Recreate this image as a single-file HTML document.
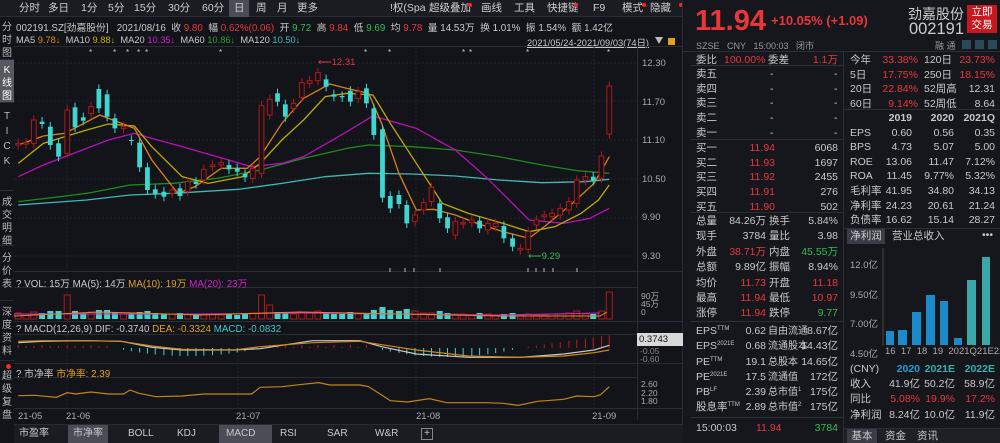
<!DOCTYPE html>
<html><head><meta charset="utf-8">
<style>
*{margin:0;padding:0;box-sizing:border-box}
body{width:1000px;height:443px;background:#131419;color:#c9c9c9;font-family:"Liberation Sans","Noto Sans CJK SC",sans-serif;font-size:10px;overflow:hidden;position:relative}
.a{position:absolute;white-space:nowrap}
.r{color:#e8363b}.g{color:#2fbf4f}.y{color:#e0a020}
.side{position:absolute;left:0;width:14px;text-align:center;font-size:10px;line-height:13px;color:#bbb;border-bottom:1px solid #2a2c33}
.rt{position:absolute;font-size:10.5px;line-height:14px;white-space:nowrap}
.rv{text-align:right}
.sp{font-size:6px;position:relative;top:-4px;line-height:0}
.tt{position:absolute;top:0;line-height:17px;font-size:10.5px;color:#cfcfcf}
svg *{vector-effect:non-scaling-stroke}
</style></head><body>
<!-- top toolbar -->
<div class="a" style="left:0;top:0;width:683px;height:17px;background:#1a1c22;border-bottom:1px solid #2a2c33"></div>
<div class="a" style="left:229px;top:0;width:20px;height:17px;background:#4a4d56"></div>
<span class="tt" style="left:19px">分时</span><span class="tt" style="left:48px">多日</span><span class="tt" style="left:81px">1分</span><span class="tt" style="left:108px">5分</span><span class="tt" style="left:134px">15分</span><span class="tt" style="left:168px">30分</span><span class="tt" style="left:202px">60分</span><span class="tt" style="left:234px">日</span><span class="tt" style="left:256px">周</span><span class="tt" style="left:277px">月</span><span class="tt" style="left:297px">更多</span>
<span class="tt" style="left:390px">!权(Spa</span><span class="tt" style="left:429px">超级叠加</span><span class="tt" style="left:481px">画线</span><span class="tt" style="left:514px">工具</span><span class="tt" style="left:547px">快捷键</span><span class="tt" style="left:593px">F9</span><span class="tt" style="left:622px">模式</span><span class="tt" style="left:650px">隐藏</span>
<div class="a" style="left:468px;top:3px;width:4px;height:4px;border-radius:2px;background:#f22"></div>
<div class="a" style="left:574px;top:3px;width:4px;height:4px;border-radius:2px;background:#f22"></div>
<div class="a" style="left:642px;top:3px;width:4px;height:4px;border-radius:2px;background:#f22"></div>
<div class="a" style="left:679px;top:3px;width:4px;height:4px;border-radius:2px;background:#f22"></div>
<!-- info line -->
<div class="a" style="left:16px;top:20px;font-size:9.8px">002191.SZ[劲嘉股份]&nbsp;&nbsp;&nbsp;2021/08/16&nbsp;&nbsp;收 <span class="r">9.80</span>&nbsp;&nbsp;幅 <span class="r">0.62%(0.06)</span>&nbsp;&nbsp;开 <span class="g">9.72</span>&nbsp;&nbsp;高 <span class="r">9.84</span>&nbsp;&nbsp;低 <span class="g">9.69</span>&nbsp;&nbsp;均 <span class="r">9.78</span>&nbsp;&nbsp;量 14.53万&nbsp;&nbsp;换 1.01%&nbsp;&nbsp;振 1.54%&nbsp;&nbsp;额 1.42亿</div>
<div class="a" style="left:16px;top:35px;font-size:9.3px">MA5 <span style="color:#e08a1e">9.78↓</span>&nbsp;&nbsp;MA10 <span style="color:#c8b400">9.88↓</span>&nbsp;&nbsp;MA20 <span style="color:#d020d0">10.35↓</span>&nbsp;&nbsp;MA60 <span style="color:#2aa02a">10.86↓</span>&nbsp;&nbsp;MA120 <span style="color:#40c0c0">10.50↓</span></div>
<div class="a" style="left:527px;top:35px;font-size:9.3px;text-decoration:underline">2021/05/24-2021/09/03(74日)</div>
<div class="a" style="left:655px;top:37px;width:0;height:0;border-left:4px solid transparent;border-right:4px solid transparent;border-top:7px solid #bbb"></div>
<div class="a" style="left:668px;top:38px;width:7px;height:7px;background:#e0a020"></div>
<!-- sidebar -->
<div class="side" style="top:17px;height:43px;padding-top:4px">分<br>时<br>图</div>
<div class="side" style="top:60px;height:43px;background:#55585f;padding-top:4px;color:#fff">K<br>线<br>图</div>
<div class="side" style="top:103px;height:88px;padding-top:6px;line-height:15px">T<br>I<br>C<br>K</div>
<div class="side" style="top:191px;height:55px;padding-top:5px">成<br>交<br>明<br>细</div>
<div class="side" style="top:246px;height:55px;padding-top:6px">分<br>价<br>表</div>
<div class="side" style="top:301px;height:60px;padding-top:5px">深<br>度<br>资<br>料</div>
<div class="a" style="left:6px;top:364px;width:5px;height:5px;border-radius:3px;background:#f22"></div>
<div class="side" style="top:370px;height:73px;border:0">超<br>级<br>复<br>盘</div>
<svg class="a" style="left:0;top:0" width="683" height="443">
<g stroke="#2a2c33" stroke-width="1">
<line x1="14" y1="46.5" x2="683" y2="46.5"/>
<line x1="637.5" y1="46" x2="637.5" y2="420"/>
<line x1="682.5" y1="0" x2="682.5" y2="443"/>
<line x1="14" y1="271.5" x2="683" y2="271.5"/>
<line x1="14" y1="287.5" x2="637" y2="287.5"/>
<line x1="14" y1="321.5" x2="683" y2="321.5"/>
<line x1="14" y1="334.5" x2="637" y2="334.5"/>
<line x1="14" y1="363.5" x2="683" y2="363.5"/>
<line x1="14" y1="377.5" x2="637" y2="377.5"/>
<line x1="14" y1="408.5" x2="683" y2="408.5"/>
<line x1="14" y1="424.5" x2="683" y2="424.5"/>
</g>
<g stroke="#23252b" stroke-dasharray="2,2">
<line x1="67" y1="47" x2="67" y2="408"/><line x1="238" y1="47" x2="238" y2="408"/><line x1="416" y1="47" x2="416" y2="408"/><line x1="594" y1="47" x2="594" y2="408"/>
<line x1="14" y1="63" x2="637" y2="63"/><line x1="14" y1="101" x2="637" y2="101"/><line x1="14" y1="140" x2="637" y2="140"/><line x1="14" y1="179" x2="637" y2="179"/><line x1="14" y1="218" x2="637" y2="218"/><line x1="14" y1="256" x2="637" y2="256"/>
</g>
<g transform="translate(0,50) scale(0.43365,0.33333)" fill="none" stroke-width="1.3">
<polyline stroke="#40b8b8" points="42,465 200,450 300,435 400,430 550,418 650,400 750,380 850,370 950,372 1050,378 1150,390 1250,398 1350,395 1405,388"/>
<polyline stroke="#1e8a1e" points="42,455 140,440 200,430 300,405 400,400 500,385 600,360 700,325 800,295 850,285 950,290 1050,300 1150,320 1250,345 1330,362 1405,370"/>
<polyline stroke="#b810b8" points="42,380 100,345 150,320 250,270 310,250 350,265 420,290 500,320 580,350 650,340 700,320 800,245 860,198 960,235 1050,300 1120,380 1220,510 1300,520 1360,505 1405,475"/>
<polyline stroke="#c0aa00" points="42,340 100,280 150,260 200,240 250,222 310,228 350,290 420,380 480,400 560,380 600,340 650,270 700,210 750,140 800,130 860,135 900,220 960,340 1020,460 1080,490 1160,520 1220,545 1280,530 1340,490 1380,450 1405,405"/>
<polyline stroke="#d8801a" points="42,285 100,258 150,250 230,195 270,215 310,235 350,330 410,430 450,410 510,355 570,355 600,320 650,220 700,145 760,102 800,115 850,130 880,220 920,370 960,480 1000,478 1050,495 1100,520 1160,545 1220,565 1260,525 1320,460 1370,400 1405,320"/>
<g id="cd"></g>
</g>
<g id="vol"></g><g id="macd"></g>
<g transform="translate(0,270) scale(0.43365,0.33333)" fill="none" stroke-width="1.2">
<polyline stroke="#c8c8c8" points="42,218 100,214 200,212 280,214 350,232 420,240 540,240 600,236 720,212 830,212 880,230 960,252 1080,262 1200,262 1300,252 1370,240 1405,226"/>
<polyline stroke="#d08a18" points="42,214 100,212 200,212 280,214 350,228 420,238 540,240 600,230 720,218 830,214 880,224 960,240 1080,258 1200,262 1300,258 1370,248 1405,240"/>
<polyline stroke="#c0841a" points="42,377 80,376 130,382 155,368 175,372 210,366 250,372 285,372 300,360 320,370 360,380 420,378 470,372 540,372 580,372 600,352 650,350 690,344 735,338 760,345 830,345 850,350 880,375 900,392 940,396 990,386 1030,398 1080,398 1120,398 1160,400 1195,406 1240,394 1300,388 1330,378 1370,380 1385,374 1405,350"/>
</g>
<g fill="#ccc" font-size="8" font-family="Liberation Sans">
<text x="89" y="55">*</text><text x="113" y="55">*</text><text x="126" y="55">*</text><text x="137" y="55">*</text><text x="145" y="55">*</text><text x="219" y="55">*</text><text x="364" y="55">*</text><text x="388" y="55">*</text><text x="462" y="55">*</text><text x="469" y="55">*</text><text x="526" y="55">*</text><text x="607" y="55">*</text>
</g>
<g stroke="#bbb"><line x1="390" y1="268" x2="390" y2="272"/><line x1="405" y1="268" x2="405" y2="272"/><line x1="414" y1="268" x2="414" y2="272"/><line x1="440" y1="268" x2="440" y2="272"/><line x1="528" y1="268" x2="528" y2="272"/><line x1="536" y1="268" x2="536" y2="272"/><line x1="544" y1="268" x2="544" y2="272"/><line x1="553" y1="268" x2="553" y2="272"/><line x1="577" y1="268" x2="577" y2="272"/></g>
</svg>
<!-- price axis -->
<div class="a" style="left:642px;top:58px;font-size:9.5px;color:#aaa">12.30</div>
<div class="a" style="left:642px;top:97px;font-size:9.5px;color:#aaa">11.70</div>
<div class="a" style="left:642px;top:135px;font-size:9.5px;color:#aaa">11.10</div>
<div class="a" style="left:642px;top:174px;font-size:9.5px;color:#aaa">10.50</div>
<div class="a" style="left:642px;top:212px;font-size:9.5px;color:#aaa">9.90</div>
<div class="a" style="left:642px;top:251px;font-size:9.5px;color:#aaa">9.30</div>
<div class="a r" style="left:318px;top:57px;font-size:9.5px">⟵12.31</div>
<div class="a g" style="left:528px;top:251px;font-size:9.5px">⟵9.29</div>
<!-- panel headers -->
<div class="a" style="left:16px;top:276px;font-size:9.8px">? VOL: 15万 MA(5): 14万 <span class="y">MA(10): 19万</span> <span style="color:#d020d0">MA(20): 23万</span></div>
<div class="a" style="left:641px;top:292px;font-size:8.5px;line-height:8px;color:#aaa">90万<br>45万<br>0</div>
<div class="a" style="left:16px;top:324px;font-size:9.8px">? MACD(12,26,9) DIF: -0.3740 <span class="y">DEA: -0.3324</span> <span style="color:#40c8c8">MACD: -0.0832</span></div>
<div class="a" style="left:637px;top:333px;width:46px;height:13px;background:#d8d8d8;color:#111;font-size:9.5px;padding-left:2px;line-height:13px">0.3743</div>
<div class="a" style="left:640px;top:347px;font-size:8.5px;line-height:8px;color:#888">-0.05<br>-0.60</div>
<div class="a" style="left:16px;top:366px;font-size:9.8px">? 市净率 <span class="y">市净率: 2.39</span></div>
<div class="a" style="left:641px;top:380px;font-size:8.5px;line-height:8.5px;color:#aaa">2.60<br>2.20<br>1.80</div>
<div class="a" style="left:18px;top:411px;font-size:9.5px;color:#aaa">21-05</div>
<div class="a" style="left:66px;top:411px;font-size:9.5px;color:#aaa">21-06</div>
<div class="a" style="left:236px;top:411px;font-size:9.5px;color:#aaa">21-07</div>
<div class="a" style="left:416px;top:411px;font-size:9.5px;color:#aaa">21-08</div>
<div class="a" style="left:592px;top:411px;font-size:9.5px;color:#aaa">21-09</div>
<!-- bottom tabs -->
<div class="a" style="left:14px;top:425px;width:669px;height:18px;background:#1a1c22;font-size:10px;line-height:18px">
<span class="a" style="left:5px">市盈率</span>
<span class="a" style="left:54px;width:40px;height:18px;background:#4a4d56;padding-left:5px">市净率</span>
<span class="a" style="left:114px">BOLL</span><span class="a" style="left:163px">KDJ</span>
<span class="a" style="left:205px;width:53px;height:18px;background:#4a4d56;padding-left:7px">MACD</span>
<span class="a" style="left:266px">RSI</span><span class="a" style="left:313px">SAR</span><span class="a" style="left:361px">W&amp;R</span>
<span class="a" style="left:407px;top:3px;width:12px;height:12px;border:1px solid #888;line-height:10px;text-align:center">+</span>
</div>

<!-- RIGHT PANEL -->
<div class="a" style="left:683px;top:0;width:317px;height:443px;background:#16171c"></div>
<div class="a r" style="left:695px;top:4px;font-size:29px;font-weight:bold;line-height:34px">11.94</div>
<div class="a r" style="left:771px;top:13px;font-size:13px;font-weight:bold">+10.05% (+1.09)</div>
<div class="a" style="left:905px;top:4px;width:59px;text-align:right;font-size:14px;color:#ccc">劲嘉股份</div>
<div class="a" style="left:900px;top:20px;width:64px;text-align:right;font-size:16.5px;color:#ccc">002191</div>
<div class="a" style="left:967px;top:5px;width:30px;height:28px;background:#c8181f;color:#fff;font-size:10.5px;line-height:13px;text-align:center;padding-top:1px">立即<br>交易</div>
<div class="a" style="left:696px;top:39px;font-size:9px;color:#999">SZSE&nbsp;&nbsp;&nbsp;CNY&nbsp;&nbsp;&nbsp;15:00:03&nbsp;&nbsp;&nbsp;闭市</div>
<div class="a" style="left:935px;top:39px;font-size:9px;color:#999">融 通</div>
<div class="a" style="left:962px;top:40px;width:9px;height:9px;background:#2a4a5a"></div>
<div class="a" style="left:975px;top:40px;width:9px;height:9px;background:#2a4a5a"></div>
<div class="a" style="left:988px;top:40px;width:9px;height:9px;background:#2a4a5a"></div>
<svg class="a" style="left:683px;top:0" width="317" height="443">
<g stroke="#2c2e35"><line x1="0" y1="51.5" x2="317" y2="51.5"/><line x1="160.5" y1="51" x2="160.5" y2="443"/>
<line x1="8" y1="65.5" x2="160" y2="65.5"/><line x1="8" y1="139.5" x2="160" y2="139.5"/><line x1="8" y1="212.5" x2="160" y2="212.5"/><line x1="8" y1="321.5" x2="160" y2="321.5"/><line x1="8" y1="417.5" x2="160" y2="417.5"/>
<line x1="161" y1="109.5" x2="317" y2="109.5"/><line x1="161" y1="228.5" x2="317" y2="228.5"/><line x1="161" y1="428.5" x2="317" y2="428.5"/></g>
<g fill="#1a8acb"><rect x="203" y="331" width="8" height="14"/><rect x="215" y="330" width="9" height="15"/><rect x="229" y="312" width="9" height="33"/><rect x="243" y="295" width="9" height="50"/><rect x="257" y="301" width="8" height="44"/><rect x="271" y="338" width="8" height="7"/></g>
<g fill="#3aa8a8"><rect x="284" y="280" width="9" height="65"/><rect x="299" y="257" width="8" height="88"/></g>
<line x1="200" y1="248" x2="200" y2="346" stroke="#444"/>
</svg>
<!-- order book left -->
<div class="rt" style="left:696px;top:53px">委比</div><div class="rt r" style="left:724px;top:53px">100.00%</div><div class="rt" style="left:768px;top:53px">委差</div><div class="rt r rv" style="left:790px;top:53px;width:48px">1.1万</div>
<div class="rt" style="left:696px;top:67px;line-height:14.7px">卖五<br>卖四<br>卖三<br>卖二<br>卖一</div>
<div class="rt" style="left:770px;top:67px;line-height:14.7px">-<br>-<br>-<br>-<br>-</div>
<div class="rt" style="left:834px;top:67px;line-height:14.7px">-<br>-<br>-<br>-<br>-</div>
<div class="rt" style="left:696px;top:141px;line-height:14.7px">买一<br>买二<br>买三<br>买四<br>买五</div>
<div class="rt r rv" style="left:740px;top:141px;width:35px;line-height:14.7px">11.94<br>11.93<br>11.92<br>11.91<br>11.90</div>
<div class="rt rv" style="left:800px;top:141px;width:38px;line-height:14.7px">6068<br>1697<br>2455<br>276<br>502</div>
<div class="rt" style="left:696px;top:214px;line-height:15.4px">总量<br>现手<br>外盘<br>总额<br>均价<br>最高<br>涨停</div>
<div class="rt rv" style="left:700px;top:214px;width:66px;line-height:15.4px">84.26万<br>3784<br><span class="r">38.71万</span><br>9.89亿<br><span class="r">11.73</span><br><span class="r">11.94</span><br><span class="r">11.94</span></div>
<div class="rt" style="left:769px;top:214px;line-height:15.4px">换手<br>量比<br>内盘<br>振幅<br>开盘<br>最低<br>跌停</div>
<div class="rt rv" style="left:790px;top:214px;width:48px;line-height:15.4px">5.84%<br>3.98<br><span class="g">45.55万</span><br>8.94%<br><span class="r">11.18</span><br><span class="r">10.97</span><br><span class="g">9.77</span></div>
<div class="rt" style="left:696px;top:324px;line-height:15.3px">EPS<span class="sp">TTM</span><br>EPS<span class="sp">2021E</span><br>PE<span class="sp">TTM</span><br>PE<span class="sp">2021E</span><br>PB<span class="sp">LF</span><br>股息率<span class="sp">TTM</span></div>
<div class="rt rv" style="left:730px;top:324px;width:36px;line-height:15.3px">0.62<br>0.68<br>19.1<br>17.5<br>2.39<br>2.89</div>
<div class="rt" style="left:768px;top:324px;line-height:15.3px;font-size:10px">自由流通<br>流通股本<br>总股本<br>流通值<br>总市值<span class="sp">1</span><br>总市值<span class="sp">2</span></div>
<div class="rt rv" style="left:790px;top:324px;width:48px;line-height:15.3px">8.67亿<br>14.43亿<br>14.65亿<br>172亿<br>175亿<br>175亿</div>
<div class="rt" style="left:696px;top:421px">15:00:03</div><div class="rt r" style="left:756px;top:421px">11.94</div><div class="rt g rv" style="left:800px;top:421px;width:38px">3784</div>
<!-- right col -->
<div class="rt" style="left:850px;top:53px;line-height:14.6px">今年<br>5日<br>20日<br>60日</div>
<div class="rt r rv" style="left:870px;top:53px;width:48px;line-height:14.6px">33.38%<br>17.75%<br>22.84%<br>9.14%</div>
<div class="rt" style="left:924px;top:53px;line-height:14.6px">120日<br>250日<br>52周高<br>52周低</div>
<div class="rt rv" style="left:950px;top:53px;width:45px;line-height:14.6px"><span class="r">23.73%</span><br><span class="r">18.15%</span><br>12.31<br>8.64</div>
<div class="rt" style="left:850px;top:111px;line-height:14.6px"><br>EPS<br>BPS<br>ROE<br>ROA<br>毛利率<br>净利率<br>负债率</div>
<div class="rt rv" style="left:870px;top:111px;width:42px;line-height:14.6px"><b>2019</b><br>0.60<br>4.73<br>13.06<br>11.45<br>41.95<br>24.23<br>16.62</div>
<div class="rt rv" style="left:914px;top:111px;width:40px;line-height:14.6px"><b>2020</b><br>0.56<br>5.07<br>11.47<br>9.77%<br>34.80<br>20.61<br>15.14</div>
<div class="rt rv" style="left:955px;top:111px;width:40px;line-height:14.6px"><b>2021Q</b><br>0.35<br>5.00<br>7.12%<br>5.32%<br>34.13<br>21.24<br>28.27</div>
<div class="a" style="left:847px;top:229px;width:38px;height:15px;background:#3a3d45;font-size:10.5px;line-height:15px;text-align:center">净利润</div>
<div class="a" style="left:892px;top:229px;font-size:10.5px;line-height:15px">营业总收入</div>
<div class="a" style="left:982px;top:229px;font-size:10.5px;line-height:13px">•••</div>
<div class="a" style="left:850px;top:251px;font-size:9.5px;color:#aaa;line-height:29.5px">12.0亿<br>9.50亿<br>7.00亿<br>4.50亿</div>
<div class="a" style="left:885px;top:346px;font-size:9.5px;color:#aaa">16&nbsp;&nbsp;17&nbsp;&nbsp;18&nbsp;&nbsp;19&nbsp;&nbsp;2021Q21E22E</div>
<div class="rt" style="left:850px;top:362px;line-height:15.2px">(CNY)<br>收入<br>同比<br>净利润</div>
<div class="rt rv" style="left:880px;top:362px;width:40px;line-height:15.2px"><b style="color:#2a9ad8">2020</b><br>41.9亿<br><span class="r">5.08%</span><br>8.24亿</div>
<div class="rt rv" style="left:920px;top:362px;width:35px;line-height:15.2px"><b style="color:#3ab0b0">2021E</b><br>50.2亿<br><span class="r">19.9%</span><br>10.0亿</div>
<div class="rt rv" style="left:955px;top:362px;width:40px;line-height:15.2px"><b style="color:#3ab0b0">2022E</b><br>58.9亿<br><span class="r">17.2%</span><br>11.9亿</div>
<div class="a" style="left:844px;top:429px;width:156px;height:14px;background:#1e2026"></div>
<div class="a" style="left:847px;top:429px;width:30px;height:14px;background:#3a3d45;font-size:10.5px;line-height:14px;text-align:center">基本</div>
<div class="a" style="left:885px;top:429px;font-size:10.5px;line-height:14px">资金</div>
<div class="a" style="left:917px;top:429px;font-size:10.5px;line-height:14px">资讯</div>
<script>
var C=[[42,280,285],[60,278,282],[78,210,280],[97,215,222,1],[116,230,285,1],[135,280,320,1],[155,180,310],[173,172,232,1],[192,202,212,1],[210,170,190],[228,117,175,1],[247,133,200,1],[265,205,235,1],[285,230,235],[303,270,272,1],[322,278,352,1],[340,352,420,1],[358,418,432,1],[378,425,440,1],[397,420,430],[415,415,438,1],[433,395,425],[452,395,402,1],[470,358,390],[490,345,350],[510,338,345],[528,345,358,1],[547,355,365,1],[565,372,382,1],[583,355,385],[603,167,370],[622,148,195],[640,130,155,1],[658,163,200,1],[677,160,175],[696,98,142],[714,92,100],[733,68,92],[752,88,110,1],[770,133,140,1],[789,138,142,1],[808,122,155,1],[826,125,145],[845,115,160,1],[862,175,255,1],[882,238,443,1],[900,438,475,1],[920,435,462,1],[938,465,520,1],[957,495,515],[977,458,480],[995,412,455],[1014,460,505,1],[1032,502,535,1],[1050,515,555],[1068,518,522],[1088,510,518],[1106,512,535,1],[1125,520,540],[1143,520,530],[1162,528,565,1],[1182,565,590,1],[1200,595,600],[1218,545,598],[1237,510,525],[1255,495,500],[1273,490,500],[1292,475,495],[1312,455,480],[1330,390,460],[1350,380,392],[1368,380,392,1],[1387,318,385],[1405,108,252]];
var s='',v='',m='';
C.forEach(function(c,i){var dn=c[3],col=dn?'#3dd6d0':'#b01818';var h=Math.max(c[2]-c[1],3);
s+='<line x1="'+c[0]+'" x2="'+c[0]+'" y1="'+(c[1]-14)+'" y2="'+(c[2]+14)+'" stroke="'+col+'" stroke-width="1"/>';
s+='<rect x="'+(c[0]-5.5)+'" y="'+c[1]+'" width="11" height="'+h+'" '+(dn?'fill="'+col+'"':'fill="#131419" stroke="'+col+'" stroke-width="1"')+'/>';
var x=c[0]/2.306;var vh=[6,5,7,6,8,8,24,8,6,7,9,9,7,5,6,7,8,6,5,5,6,5,4,5,5,4,5,4,6,6,24,14,7,6,5,6,6,8,6,5,5,7,5,6,9,12,9,8,10,8,6,6,8,6,5,5,4,6,5,4,5,6,4,5,4,4,5,5,6,8,5,5,8,27][i];
v+='<rect x="'+(x-3)+'" y="'+(319-vh)+'" width="6" height="'+vh+'" '+(dn?'fill="#3dd6d0"':'fill="none" stroke="#b01818"')+'/>';
var mh=i<12?(i%3?2:3):i<30?-((i-12)*(30-i)/10):i<44?(i%2?3:1):i<62?-((i-44)*(62-i)/9):(i-62)*1.2;
m+='<line x1="'+x+'" x2="'+x+'" y1="348" y2="'+(348-mh)+'" stroke="'+(mh>0?'#c01818':'#3dd6d0')+'"/>';});
document.getElementById('cd').innerHTML=s;
document.getElementById('vol').innerHTML=v+'<polyline fill="none" stroke="#d020d0" points="14,314 200,314 300,313 500,315 600,313"/><polyline fill="none" stroke="#e08a1e" points="14,316 100,312 200,315 300,312 500,316 600,316 607,312"/>';
document.getElementById('macd').innerHTML=m;
</script>
</body></html>
